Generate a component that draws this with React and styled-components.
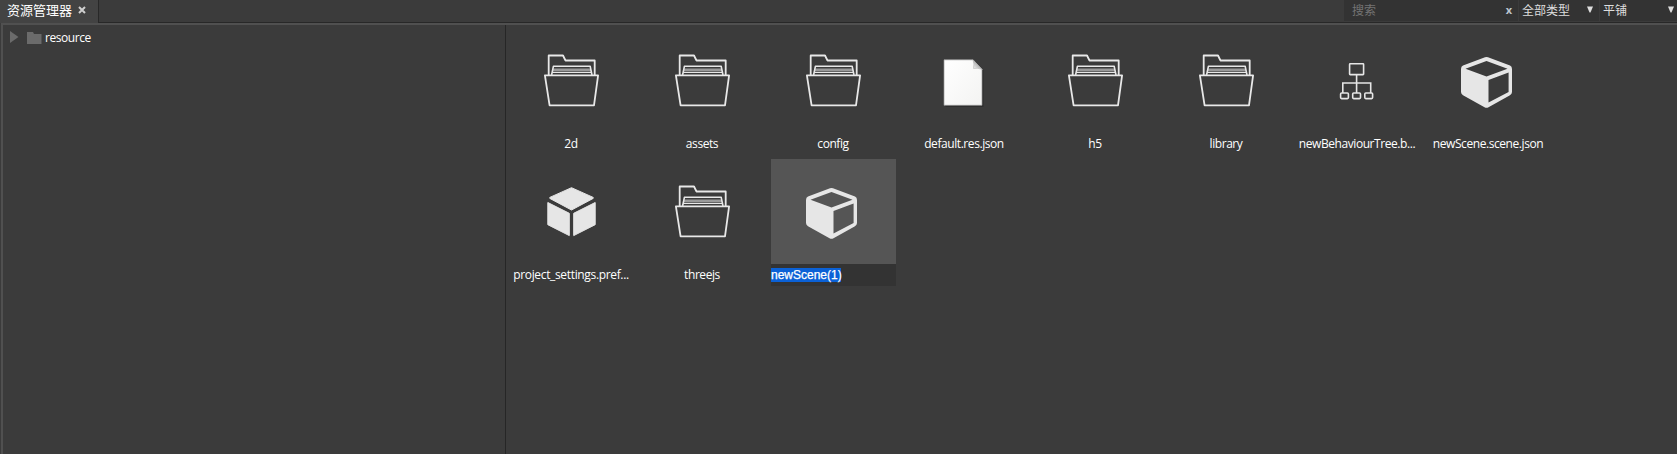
import React from 'react';
import styled, { createGlobalStyle } from 'styled-components';

const Global = createGlobalStyle`
  * { box-sizing: border-box; }
  body { margin: 0; background: #3b3b3b; }
`;

const Panel = styled.div`
  width: 100%;
  height: 454px;
  display: flex;
  flex-direction: column;
  overflow: hidden;
  background: #3b3b3b;
  color: #fff;
  font: 12px 'Open Sans', 'Noto Sans CJK SC', sans-serif;
`;

const Header = styled.div`
  height: 23px;
  display: flex;
  justify-content: space-between;
  align-items: flex-start;
  flex-shrink: 0;
`;

const Tab = styled.div`
  width: 98px;
  height: 23px;
  display: flex;
  align-items: center;
  padding: 0 0 3px 7px;
  background: #434343;
  font: 13px/20px 'Noto Sans CJK SC', sans-serif;
  white-space: nowrap;
`;

const CloseIcon = styled.svg`
  margin: 0 0 0 6px;
`;

const HeaderRest = styled.div`
  flex: 1;
  height: 23px;
  display: flex;
  justify-content: flex-end;
  border-left: 1px solid #282828;
  border-bottom: 1px solid #282828;
`;

const Field = styled.div`
  width: ${(p) => p.$width}px;
  height: 21px;
  margin-left: ${(p) => p.$gap || 0}px;
  padding: 0 ${(p) => p.$right}px 2px ${(p) => p.$left}px;
  display: flex;
  align-items: center;
  justify-content: space-between;
  background: #333;
  color: ${(p) => p.$color || '#dedede'};
  font: 12px/19px 'Noto Sans CJK SC', sans-serif;
`;

const Clear = styled.span`
  color: #bcc4cc;
  font: bold 11px/19px 'Open Sans', sans-serif;
`;

const Body = styled.div`
  flex: 1;
  display: flex;
  margin-left: 1px;
  border-left: 2px solid #505050;
  border-top: 2px solid #505050;
`;

const Tree = styled.div`
  width: 502px;
  padding-top: 4px;
`;

const TreeRow = styled.div`
  height: 18px;
  display: flex;
  align-items: center;
  padding-left: 6px;
`;

const TreeLabel = styled.span`
  margin-left: 3px;
  line-height: 18px;
  letter-spacing: -0.43px;
`;

const TreeArrow = styled.svg`
  margin-bottom: 3px;
`;

const TreeFolder = styled.svg`
  margin-left: 8px;
`;

const Files = styled.div`
  flex: 1;
  display: grid;
  grid-template-columns: repeat(8, 125px);
  grid-auto-rows: 127px;
  column-gap: 6px;
  row-gap: 4px;
  align-content: start;
  padding: 3px 0 0 3px;
  border-left: 1px solid #262626;
`;

const Tile = styled.div`
  display: flex;
  flex-direction: column;
`;

const Thumb = styled.div`
  height: 105px;
  flex-shrink: 0;
  padding: 20px 0 0 31px;
  background: ${(p) => (p.$selected ? '#555' : 'transparent')};
`;

const Label = styled.div`
  height: 22px;
  line-height: 21px;
  padding-right: 1px;
  text-align: center;
  white-space: nowrap;
  letter-spacing: ${(p) => p.$spacing || -0.43}px;
`;

const NameInput = styled.div`
  height: 22px;
  flex-shrink: 0;
  display: flex;
  align-items: center;
  background: #333;
`;

const Selection = styled.span`
  width: 70px;
  height: 14px;
  background: #0b61d6;
  color: #fff;
  font: 12px/14px 'Liberation Sans', sans-serif;
  -webkit-text-stroke: 0.25px #fff;
  white-space: nowrap;
`;

const Svg = styled.svg`
  display: block;
`;

const Arrow = () => (
  <svg width="6" height="7" viewBox="0 0 6 7"><path d="M0 .5H6L3.5 6.5H2.5Z" fill="#dedede" /></svg>
);

const FolderIcon = () => (
  <Svg width="64" height="64" fill="none" stroke="#e8e8e8" strokeWidth="1.8" strokeLinejoin="round">
    <path d="M8.7 27V7.5H23L25.5 12.5H54.7V27" />
    <path d="M12.5 21.8H51" stroke="#9a9a9a" strokeWidth="2.4" />
    <path d="M11.6 27L13.4 18.3H50.2L52 27" strokeWidth="1.6" />
    <path d="M12 24.4H51.5" strokeWidth="1.4" />
    <path d="M4.9 27.3H58.1L54 57.4H9.6Z" />
  </Svg>
);

const FileIcon = () => (
  <Svg width="64" height="64">
    <defs>
      <linearGradient id="sheet" x1="0" y1="0" x2="1" y2="1">
        <stop offset="0" stopColor="#fff" />
        <stop offset="1" stopColor="#f3f3f2" />
      </linearGradient>
      <linearGradient id="curl" x1="0" y1="1" x2=".6" y2=".4">
        <stop offset="0" stopColor="#fafafa" />
        <stop offset="1" stopColor="#aaa" />
      </linearGradient>
    </defs>
    <path d="M12.5 13H41L50.5 22V59H12.5Z" fill="#222" opacity=".5" />
    <path d="M11 11.8H40L49 21.2V57.3H11Z" fill="url(#sheet)" stroke="#999" strokeWidth=".7" />
    <path d="M40 11.8Q41.5 16 40.5 20.5Q45 19.5 49 21.5Z" fill="url(#curl)" stroke="#aaa" strokeWidth=".5" />
  </Svg>
);

const TreeIcon = () => (
  <Svg width="64" height="64" fill="none" stroke="#e6e6e6" strokeWidth="1.6">
    <rect x="23.6" y="15.8" width="14" height="10.8" rx=".6" />
    <path d="M30.6 26.6V45M16.8 45V35H44.7V45" />
    <rect x="14.6" y="45" width="7.8" height="5.6" rx="1" />
    <rect x="26.7" y="45" width="7.8" height="5.6" rx="1" />
    <rect x="38.8" y="45" width="7.8" height="5.6" rx="1" />
  </Svg>
);

const SceneIcon = () => (
  <Svg width="64" height="64" viewBox="2 0 64 64">
    <path
      d="M30 9.3Q31.5 8.6 33 9.3L55 17.6Q57 18.5 57 21V44Q57 46 55 47.3L33.5 59.3Q31.5 60.3 29.5 59.3L8 47.3Q6 46 6 44V21Q6 18.5 8 17.6ZM31.5 13L10.5 20.8L31.5 28.5L52.5 20.8ZM33.5 32V54.5L53.6 44V24.5Z"
      fill="#e6e6e6"
      fillRule="evenodd"
    />
  </Svg>
);

const PrefabIcon = () => (
  <Svg width="64" height="64" fill="#e6e6e6" stroke="#e6e6e6" strokeWidth="1" strokeLinejoin="round">
    <path d="M31.5 8.7L53.2 18.4V19.4L31.5 31L9.8 19.4V18.4Z" />
    <path d="M7.8 23.5L29.3 34.3V56.6L7.8 45.7Z" />
    <path d="M55.2 23.5L33.7 34.3V56.6L55.2 45.7Z" />
  </Svg>
);

const icons = { folder: FolderIcon, file: FileIcon, tree: TreeIcon, scene: SceneIcon, prefab: PrefabIcon };

const files = [
  { name: '2d', icon: 'folder' },
  { name: 'assets', icon: 'folder' },
  { name: 'config', icon: 'folder' },
  { name: 'default.res.json', icon: 'file' },
  { name: 'h5', icon: 'folder' },
  { name: 'library', icon: 'folder' },
  { name: 'newBehaviourTree.b...', icon: 'tree' },
  { name: 'newScene.scene.json', icon: 'scene' },
  { name: 'project_settings.pref...', icon: 'prefab', spacing: -0.34 },
  { name: 'threejs', icon: 'folder' },
  { name: 'newScene(1)', icon: 'scene', editing: true },
];

function FileTile({ file }) {
  const Icon = icons[file.icon];
  return (
    <Tile>
      <Thumb $selected={file.editing}><Icon /></Thumb>
      {file.editing ? (
        <NameInput><Selection>{file.name}</Selection></NameInput>
      ) : (
        <Label $spacing={file.spacing}>{file.name}</Label>
      )}
    </Tile>
  );
}

export default function App() {
  return (
    <Panel>
      <Global />
      <Header>
        <Tab>
          资源管理器
          <CloseIcon width="8" height="8"><path d="M1 1L7 7M7 1L1 7" stroke="#cfcfcf" strokeWidth="2" /></CloseIcon>
        </Tab>
        <HeaderRest>
          <Field $width={174} $left={8} $right={6} $color="#747474">搜索<Clear>x</Clear></Field>
          <Field $width={80} $gap={1} $left={3} $right={6}>全部类型<Arrow /></Field>
          <Field $width={77} $gap={1} $left={3} $right={3}>平铺<Arrow /></Field>
        </HeaderRest>
      </Header>
      <Body>
        <Tree>
          <TreeRow>
            <TreeArrow width="10" height="12"><path d="M1 0L9.5 6L1 12Z" fill="#6b6b6b" /></TreeArrow>
            <TreeFolder width="15" height="12"><path d="M0 0H6L7 2H14.5V12H0Z" fill="#6b6b6b" /></TreeFolder>
            <TreeLabel>resource</TreeLabel>
          </TreeRow>
        </Tree>
        <Files>{files.map((f) => <FileTile key={f.name} file={f} />)}</Files>
      </Body>
    </Panel>
  );
}
